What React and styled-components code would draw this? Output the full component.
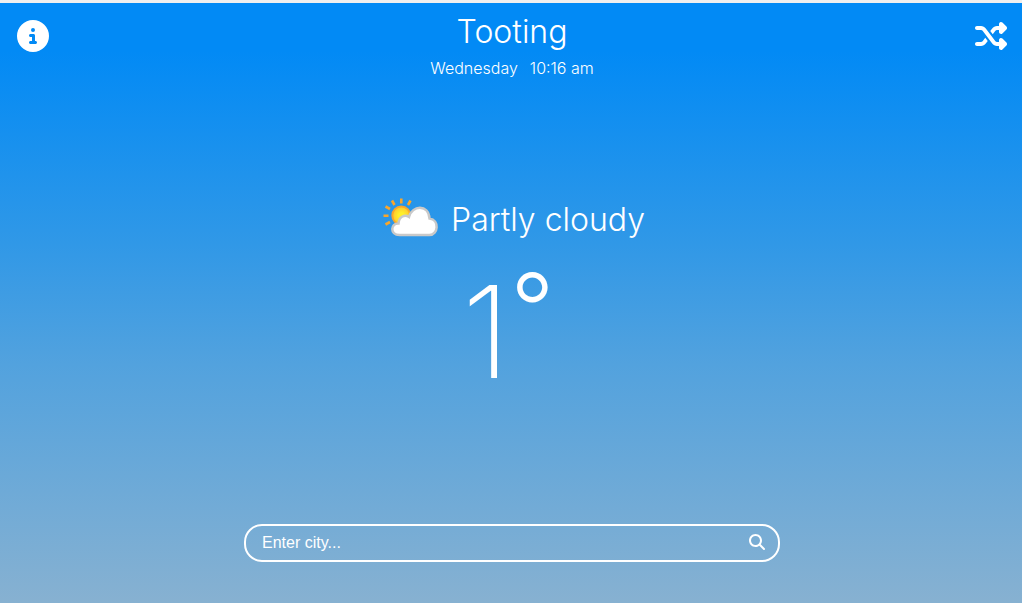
import React from "react";
import styled, { createGlobalStyle } from "styled-components";
import { FaCircleInfo, FaShuffle, FaMagnifyingGlass } from "react-icons/fa6";

const GlobalStyle = createGlobalStyle`
  *, *::before, *::after { box-sizing: border-box; }
  body { margin: 0; }
`;

const Page = styled.div`
  display: flex;
  flex-direction: column;
  min-height: 100vh;
  padding-left: 2px;
  border-top: 3px solid #efefef;
  background: linear-gradient(180deg, #028af5 8%, #3098e7 40%, #52a2de 60%, #87b1d1 100%);
  color: #fff;
  font-family: Inter, "Liberation Sans", sans-serif;
  font-weight: 300;
`;

const Header = styled.header`
  display: flex;
  justify-content: space-between;
  align-items: flex-start;
  padding: 9px 15px 0;
`;

const IconButton = styled.button`
  display: flex;
  margin: 8px 0 0;
  padding: 0;
  border: 0;
  background: none;
  color: inherit;
  font-size: 32px;
  cursor: pointer;
`;

const Place = styled.div`
  text-align: center;
`;

const City = styled.h1`
  margin: 0;
  font-size: 32px;
  line-height: 40px;
  font-weight: 300;
`;

const Moment = styled.p`
  display: flex;
  justify-content: center;
  gap: 12px;
  margin: 4px 0 0;
  font-size: 16px;
  line-height: 24px;
`;

const Weather = styled.main`
  flex: 1;
  display: flex;
  flex-direction: column;
  align-items: center;
  justify-content: center;
  padding-bottom: 16px;
`;

const Condition = styled.div`
  display: flex;
  align-items: center;
  gap: 12px;
  padding-left: 4px;
  font-size: 32px;
  line-height: 48px;
`;

const ConditionText = styled.span`
  padding-top: 4px;
`;

const Temperature = styled.p`
  display: flex;
  align-items: flex-start;
  margin: 24px 0 0;
  padding-right: 8px;
  font-size: 128px;
  line-height: 128px;
  font-weight: 200;
`;

const Degree = styled.span`
  font-size: 96px;
  line-height: 80px;
  font-weight: 300;
`;

const Search = styled.form`
  display: flex;
  align-items: center;
  align-self: center;
  width: 536px;
  max-width: 90%;
  height: 38px;
  margin-bottom: 41px;
  padding: 0 13px 0 16px;
  border: 2px solid #fff;
  border-radius: 18px;
`;

const SearchInput = styled.input`
  flex: 1;
  min-width: 0;
  padding: 0;
  border: 0;
  outline: 0;
  background: none;
  color: #fff;
  font-family: "Liberation Sans", Arial, sans-serif;
  font-size: 16px;
  &::placeholder { color: #fff; opacity: 1; }
`;

const SearchButton = styled.button`
  display: flex;
  padding: 0 0 2px;
  border: 0;
  background: none;
  color: inherit;
  font-size: 16px;
  cursor: pointer;
`;

function PartlyCloudy() {
  return (
    <svg width="56" height="40" viewBox="0 0 56 40" aria-hidden="true">
      <defs>
        <radialGradient id="sun">
          <stop offset="0.3" stopColor="#fff02a" />
          <stop offset="1" stopColor="#fdc72c" />
        </radialGradient>
      </defs>
      <g stroke="#f9a62b" strokeWidth="2.600">
        <path d="M18.300 .5v5M27.500 2.500l-2.500 4.500M9 2.500l2.500 4.500M2.500 8.500l4.500 2.500M.5 17.700h5M2.500 26.500l4.500-2.500" />
      </g>
      <circle cx="18.300" cy="17.500" r="9" fill="url(#sun)" stroke="#f9a62b" strokeWidth="2" />
      <path
        d="M16.500 37C6.500 37 7.500 25 15.500 25.500C16 18 22 16.500 26 19C29 7 45.500 6 46.500 20.500C57 22 55 37 46.500 37Z"
        fill="#fff"
        stroke="#c9c9c9"
        strokeWidth="2.500"
      />
    </svg>
  );
}

export default function App() {
  return (
    <>
      <GlobalStyle />
      <Page>
        <Header>
          <IconButton type="button" aria-label="Information"><FaCircleInfo /></IconButton>
          <Place>
            <City>Tooting</City>
            <Moment><span>Wednesday</span><span>10:16 am</span></Moment>
          </Place>
          <IconButton type="button" aria-label="Random city"><FaShuffle /></IconButton>
        </Header>
        <Weather>
          <Condition><PartlyCloudy /><ConditionText>Partly cloudy</ConditionText></Condition>
          <Temperature>1<Degree>°</Degree></Temperature>
        </Weather>
        <Search onSubmit={(event) => event.preventDefault()}>
          <SearchInput type="text" aria-label="City" placeholder="Enter city..." />
          <SearchButton type="submit" aria-label="Search"><FaMagnifyingGlass /></SearchButton>
        </Search>
      </Page>
    </>
  );
}
